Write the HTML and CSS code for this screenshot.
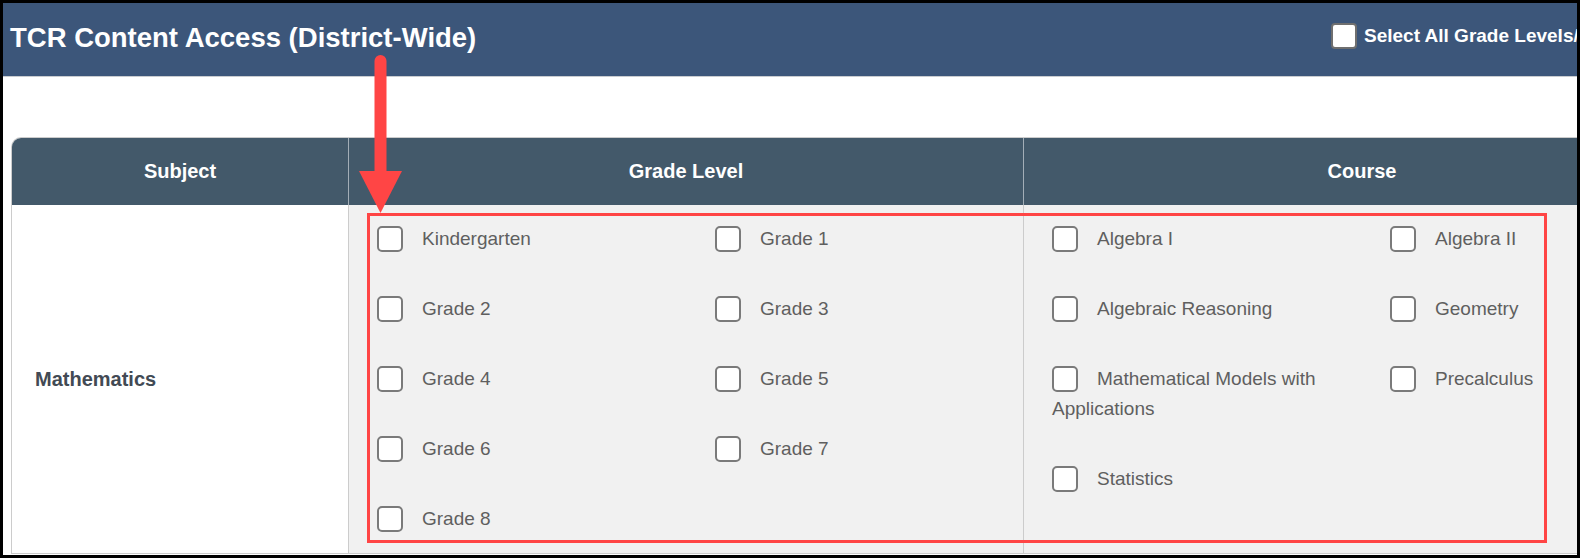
FILE: index.html
```html
<!DOCTYPE html>
<html lang="en">
<head>
<meta charset="utf-8">
<title>TCR Content Access</title>
<link rel="stylesheet" href="styles.css">
</head>
<body>
<div class="frame">
  <header class="topbar">
    <h1 class="title">TCR Content Access (District-Wide)</h1>
    <label class="select-all"><span class="cb cb-head"></span><span>Select All Grade Levels/Courses</span></label>
  </header>
  <main class="content">
    <div class="table">
      <div class="th">Subject</div>
      <div class="th">Grade Level</div>
      <div class="th th-last">Course</div>

      <div class="td subject">Mathematics</div>
      <div class="td opts">
        <div class="opt-grid">
          <div class="opt"><span class="cb"></span>Kindergarten</div>
          <div class="opt"><span class="cb"></span>Grade 1</div>
          <div class="opt"><span class="cb"></span>Grade 2</div>
          <div class="opt"><span class="cb"></span>Grade 3</div>
          <div class="opt"><span class="cb"></span>Grade 4</div>
          <div class="opt"><span class="cb"></span>Grade 5</div>
          <div class="opt"><span class="cb"></span>Grade 6</div>
          <div class="opt"><span class="cb"></span>Grade 7</div>
          <div class="opt"><span class="cb"></span>Grade 8</div>
        </div>
      </div>
      <div class="td opts td-last">
        <div class="opt-grid">
          <div class="opt"><span class="cb"></span>Algebra I</div>
          <div class="opt"><span class="cb"></span>Algebra II</div>
          <div class="opt"><span class="cb"></span>Algebraic Reasoning</div>
          <div class="opt"><span class="cb"></span>Geometry</div>
          <div class="opt"><span class="cb"></span>Mathematical Models with Applications</div>
          <div class="opt"><span class="cb"></span>Precalculus</div>
          <div class="opt"><span class="cb"></span>Statistics</div>
        </div>
      </div>
    </div>
  </main>
</div>
<div class="annot-box"></div>
<svg class="annot-arrow" viewBox="0 0 50 170" xmlns="http://www.w3.org/2000/svg">
  <line x1="25.5" y1="11" x2="25.5" y2="125" stroke="#ff4545" stroke-width="12" stroke-linecap="round"/>
  <polygon points="4,121 47,121 25.5,163" fill="#ff4545"/>
</svg>
</body>
</html>
```
FILE: styles.css
```css
* {
  box-sizing: border-box;
}

body {
  margin: 0;
  background: #000;
  font-family: "Liberation Sans", Arial, sans-serif;
}

.frame {
  width: 1580px;
  height: 558px;
  border: 3px solid #000;
  background: #fff;
  overflow: hidden;
}

.topbar {
  display: flex;
  align-items: center;
  height: 74px;
  padding: 0 0 4px 7px;
  background: #3c567a;
  border-bottom: 1px solid #c9ccd0;
  white-space: nowrap;
  overflow: hidden;
}

.title {
  flex: 0 0 1321px;
  margin: 0;
  font-size: 27.5px;
  font-weight: bold;
  line-height: 1;
  color: #fff;
}

.select-all {
  display: flex;
  align-items: center;
  gap: 7px;
  flex-shrink: 0;
  margin-bottom: 3px;
  font-size: 19px;
  font-weight: bold;
  color: #fff;
}

.content {
  padding: 60px 0 0 8px;
}

.table {
  display: grid;
  grid-template-columns: 337px 675px 676px;
  width: 1689px;
  border-left: 1px solid #ccc;
  border-top: 1px solid #ccc;
  border-top-left-radius: 10px;
  overflow: hidden;
}

.th {
  display: flex;
  align-items: center;
  justify-content: center;
  height: 67px;
  background: #43596a;
  border-right: 1px solid #a3aeb7;
  font-size: 20px;
  font-weight: bold;
  color: #fff;
}

.th-last {
  border-right: 0;
}

.td {
  background: #f1f1f1;
  border-right: 1px solid #ccc;
  border-bottom: 1px solid #ccc;
}

.td-last {
  border-right: 0;
}

.subject {
  display: flex;
  align-items: center;
  padding-left: 23px;
  background: #fff;
  font-size: 20px;
  font-weight: bold;
  color: #424a54;
}

.opts {
  padding: 19px 0 19px 28px;
}

.opt-grid {
  display: grid;
  grid-template-columns: 338px 300px;
  row-gap: 40px;
  align-items: start;
}

.opt {
  font-size: 19px;
  line-height: 30px;
  color: #5f5f5f;
}

.cb {
  display: inline-block;
  width: 26px;
  height: 26px;
  margin-right: 19px;
  margin-top: -2px;
  vertical-align: middle;
  background: #fff;
  border: 2px solid #7a7a7a;
  border-radius: 5px;
}

.cb-head {
  margin-right: 0;
  margin-top: 0;
  border-color: #6f6f6f;
  border-radius: 4px;
}

.annot-box {
  position: absolute;
  left: 367px;
  top: 213px;
  width: 1180px;
  height: 330px;
  border: 3px solid #ff4545;
}

.annot-arrow {
  position: absolute;
  left: 355px;
  top: 50px;
  width: 50px;
  height: 170px;
}
```
